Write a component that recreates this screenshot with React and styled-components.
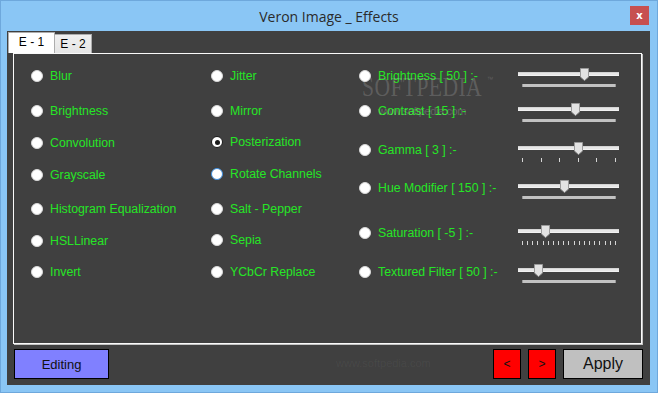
import React from "react";
import styled, { createGlobalStyle } from "styled-components";

const GlobalStyle = createGlobalStyle`
  html, body {
    margin: 0;
    padding: 0;
    background: #8ac6f5;
  }
  * {
    box-sizing: border-box;
  }
`;

const Window = styled.div`
  width: 658px;
  height: 393px;
  background: #8ac6f5;
  border: 1px solid #6ea8dc;
  display: flex;
  flex-direction: column;
  font-family: "Liberation Sans", Arial, sans-serif;
`;

const TitleBar = styled.div`
  height: 30px;
  flex: none;
  display: grid;
  grid-template-columns: 1fr auto 1fr;
  align-items: center;
`;

const Title = styled.div`
  grid-column: 2;
  font-family: "Open Sans", "Noto Sans", sans-serif;
  font-size: 14px;
  color: #2b2b2b;
  padding-top: 1px;
`;

const CloseButton = styled.div`
  grid-column: 3;
  justify-self: end;
  align-self: start;
  margin-top: 5px;
  margin-right: 8px;
  width: 19px;
  height: 19px;
  background: #c75050;
  color: #fff;
  font-family: "DejaVu Sans", sans-serif;
  font-weight: bold;
  font-size: 10px;
  display: flex;
  align-items: center;
  justify-content: center;
`;

const Client = styled.div`
  flex: 1;
  margin: 0 7px 7px 6px;
  background: #404040;
  padding: 1px 0 0 1px;
  display: flex;
  flex-direction: column;
`;

const TabStrip = styled.div`
  display: flex;
  align-items: flex-end;
  height: 21px;
  flex: none;
`;

const Tab = styled.div`
  height: ${(p) => (p.$active ? "21px" : "19px")};
  width: ${(p) => (p.$active ? "47px" : "38px")};
  margin-left: ${(p) => (p.$active ? "0" : "-1px")};
  background: ${(p) => (p.$active ? "#ffffff" : "linear-gradient(#f0f0f0, #e5e5e5)")};
  border: 1px solid #adadad;
  border-bottom: none;
  font-size: 12px;
  color: #000;
  display: flex;
  align-items: center;
  justify-content: center;
  padding-bottom: ${(p) => (p.$active ? "2px" : "0")};
`;

const Panel = styled.div`
  position: relative;
  flex: none;
  height: 291px;
  margin: 0 8px 0 5px;
  border: 1px solid #fafafa;
  box-shadow: 1px 1px 0 #c4c4c4;
  display: grid;
  grid-template-columns: 180px 148px 1fr;
  padding: 0 0 0 17px;
`;

const Column = styled.div`
  display: flex;
  flex-direction: column;
`;

const OptionRow = styled.div`
  height: 20px;
  margin-top: ${(p) => p.$gap}px;
  display: flex;
  align-items: center;
  gap: 7px;
`;

const SliderRow = styled.div`
  height: 20px;
  margin-top: ${(p) => p.$gap}px;
  display: grid;
  grid-template-columns: 159px 101px;
  align-items: start;
`;

const RadioLabel = styled.div`
  display: flex;
  align-items: center;
  gap: 7px;
  height: 20px;
`;

const Radio = styled.span`
  width: 12px;
  height: 12px;
  flex: none;
  border-radius: 50%;
  background: #ffffff;
  border: ${(p) =>
    p.$checked ? "1.5px solid #1a1a1a" : p.$hover ? "1px solid #3d8ee0" : "1px solid #d8d8d8"};
  display: flex;
  align-items: center;
  justify-content: center;
  &::after {
    content: "";
    display: ${(p) => (p.$checked ? "block" : "none")};
    width: 5px;
    height: 5px;
    border-radius: 50%;
    background: #1a1a1a;
  }
`;

const Label = styled.span`
  font-size: 12.3px;
  color: #26e626;
  white-space: nowrap;
`;

const Slider = styled.div`
  position: relative;
  width: 101px;
  padding-top: 6px;
`;

const Track = styled.div`
  height: 4px;
  background: #e7e7e7;
  border-top: 1px solid #d4d4d4;
  border-bottom: 1px solid #f2f2f2;
`;

const Thumb = styled.svg`
  position: absolute;
  top: 2px;
  width: 9px;
  height: 13px;
`;

const TickBar = styled.div`
  margin: 8px 3px 0 4px;
  height: 3px;
  background: #c2c2c2;
  border-left: 1px solid #9a9a9a;
  border-right: 1px solid #9a9a9a;
`;

const Ticks = styled.div`
  margin: 8px 3px 0 4px;
  height: 4px;
  display: flex;
  justify-content: space-between;
`;

const Tick = styled.span`
  width: 1px;
  height: 4px;
  background: #d6d6d6;
`;

const Watermark = styled.div`
  position: absolute;
  left: 348px;
  top: 13px;
  pointer-events: none;
  color: rgba(255, 255, 255, 0.17);
`;

const WatermarkLogo = styled.div`
  font-family: "Liberation Serif", serif;
  font-size: 27px;
  line-height: 26px;
  letter-spacing: 0.5px;
  transform: scaleX(0.8);
  transform-origin: left;
  white-space: nowrap;
  sup {
    font-family: "Liberation Sans", sans-serif;
    font-size: 8px;
    vertical-align: 14px;
    margin-left: 6px;
  }
`;

const WatermarkUrl = styled.div`
  font-size: 11px;
  letter-spacing: -0.4px;
  margin: 5px 0 0 16px;
  color: rgba(255, 255, 255, 0.2);
`;

const ButtonRow = styled.div`
  flex: none;
  height: 30px;
  margin: 5px 7px 0 6px;
  display: flex;
  gap: 7px;
`;

const Spacer = styled.div`
  flex: 1;
  padding: 8px 0 0 220px;
  font-size: 11px;
  color: rgba(255, 255, 255, 0.06);
`;

const Button = styled.div`
  width: ${(p) => p.$w}px;
  height: 30px;
  background: ${(p) => p.$bg};
  border: 1px solid #000;
  color: #111;
  font-size: ${(p) => p.$size}px;
  display: flex;
  align-items: center;
  justify-content: center;
`;

const col1 = [
  ["Blur", 12],
  ["Brightness", 15],
  ["Convolution", 12],
  ["Grayscale", 12],
  ["Histogram Equalization", 14],
  ["HSLLinear", 12],
  ["Invert", 11],
];

const col2 = [
  ["Jitter", 12],
  ["Mirror", 15],
  ["Posterization", 11, "checked"],
  ["Rotate Channels", 12, "hover"],
  ["Salt - Pepper", 15],
  ["Sepia", 11],
  ["YCbCr Replace", 12],
];

const sliders = [
  { label: "Brightness [ 50 ] :-", gap: 12, pos: 62, ticks: "bar" },
  { label: "Contrast [ 15 ] :-", gap: 15, pos: 53, ticks: "bar" },
  { label: "Gamma [ 3 ] :-", gap: 19, pos: 56, ticks: 6 },
  { label: "Hue Modifier [ 150 ] :-", gap: 18, pos: 42, ticks: "bar" },
  { label: "Saturation [ -5 ] :-", gap: 25, pos: 23, ticks: 19 },
  { label: "Textured Filter [ 50 ] :-", gap: 19, pos: 16, ticks: "bar" },
];

function TrackBar({ pos, ticks }) {
  return (
    <Slider>
      <Track />
      <Thumb style={{ left: pos }} viewBox="0 0 9 13">
        <path d="M0.5 0.5 H8.5 V9 L4.5 12.5 L0.5 9 Z" fill="#e2e2e2" stroke="#9a9a9a" />
      </Thumb>
      {ticks === "bar" ? (
        <TickBar />
      ) : (
        <Ticks>
          {Array.from({ length: ticks }).map((_, i) => (
            <Tick key={i} />
          ))}
        </Ticks>
      )}
    </Slider>
  );
}

export default function App() {
  return (
    <>
      <GlobalStyle />
      <Window>
        <TitleBar>
          <Title>Veron Image _ Effects</Title>
          <CloseButton>x</CloseButton>
        </TitleBar>
        <Client>
          <TabStrip>
            <Tab $active>E - 1</Tab>
            <Tab>E - 2</Tab>
          </TabStrip>
          <Panel>
            <Column>
              {col1.map(([name, gap]) => (
                <OptionRow key={name} $gap={gap}>
                  <Radio />
                  <Label>{name}</Label>
                </OptionRow>
              ))}
            </Column>
            <Column>
              {col2.map(([name, gap, state]) => (
                <OptionRow key={name} $gap={gap}>
                  <Radio $checked={state === "checked"} $hover={state === "hover"} />
                  <Label>{name}</Label>
                </OptionRow>
              ))}
            </Column>
            <Column>
              {sliders.map((s) => (
                <SliderRow key={s.label} $gap={s.gap}>
                  <RadioLabel>
                    <Radio />
                    <Label>{s.label}</Label>
                  </RadioLabel>
                  <TrackBar pos={s.pos} ticks={s.ticks} />
                </SliderRow>
              ))}
            </Column>
            <Watermark>
              <WatermarkLogo>
                SOFTPEDIA<sup>™</sup>
              </WatermarkLogo>
              <WatermarkUrl>www.softpedia.com</WatermarkUrl>
            </Watermark>
          </Panel>
          <ButtonRow>
            <Button $w={95} $bg="#8080ff" $size={13}>
              Editing
            </Button>
            <Spacer>www.softpedia.com</Spacer>
            <Button $w={28} $bg="#ff0000" $size={12}>
              &lt;
            </Button>
            <Button $w={28} $bg="#ff0000" $size={12}>
              &gt;
            </Button>
            <Button $w={80} $bg="#c0c0c0" $size={16}>
              Apply
            </Button>
          </ButtonRow>
        </Client>
      </Window>
    </>
  );
}
